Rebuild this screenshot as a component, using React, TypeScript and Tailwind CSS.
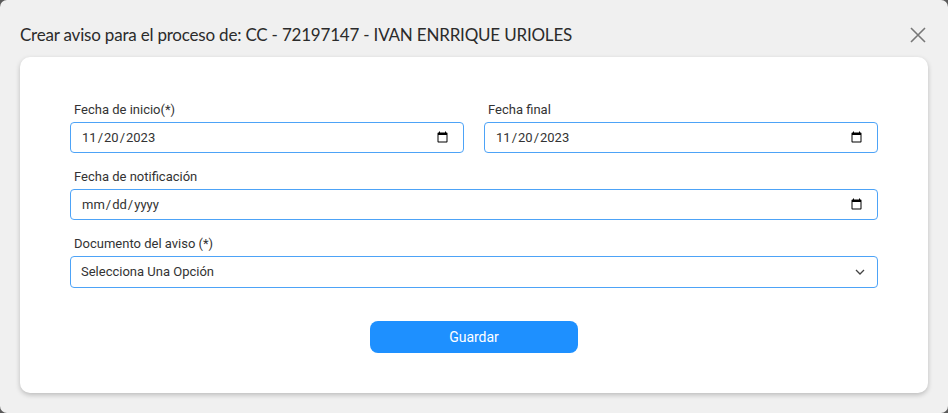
import React from "react";

const labelCls = "block text-[13px] leading-4 text-[#333] mb-[4px] pl-1";
const inputCls =
  "w-full h-[31px] rounded-[4px] border border-[#4da3f7] bg-white pl-[10px] pr-[12px] text-[13px] text-[#333] outline-none";

const Field = ({ label, children }: { label: string; children: React.ReactNode }) => (
  <div className="flex flex-col">
    <label className={labelCls}>{label}</label>
    {children}
  </div>
);

const App = () => {
  return (
    <div className="w-[948px] h-[413px] bg-[#5a5a5a]">
      <div
        className="w-full h-full bg-[#f0f0f0] rounded-[7px] px-5 pt-[20px] flex flex-col"
        style={{ fontFamily: "Roboto, 'Liberation Sans', sans-serif" }}
      >
        <div className="flex items-center justify-between h-[30px]">
          <h2
            className="text-[17px] tracking-[-0.2px] text-[#2b2b2b]"
            style={{ fontFamily: "Lato, 'Noto Sans', sans-serif" }}
          >
            Crear aviso para el proceso de: CC - 72197147 - IVAN ENRRIQUE URIOLES
          </h2>
          <button className="mr-[1px] text-[#777]" aria-label="Cerrar">
            <svg width="18" height="18" viewBox="0 0 18 18" fill="none" stroke="currentColor" strokeWidth="1.6">
              <path d="M2 2 L16 16 M16 2 L2 16" />
            </svg>
          </button>
        </div>
        <div className="mt-[7px] h-[336px] bg-white rounded-[10px] shadow-[0_2px_5px_rgba(0,0,0,0.22)] px-[50px] pt-[45px]">
          <div className="grid grid-cols-2 gap-x-5">
            <Field label="Fecha de inicio(*)">
              <input type="date" defaultValue="2023-11-20" className={inputCls} />
            </Field>
            <Field label="Fecha final">
              <input type="date" defaultValue="2023-11-20" className={inputCls} />
            </Field>
          </div>
          <div className="mt-[16px]">
            <Field label="Fecha de notificación">
              <input type="date" className={inputCls} />
            </Field>
          </div>
          <div className="mt-[16px]">
            <Field label="Documento del aviso (*)">
              <div className="relative">
                <select className={inputCls + " h-[32px] appearance-none"} defaultValue="">
                  <option value="">Selecciona Una Opción</option>
                </select>
                <svg
                  className="absolute right-[13px] top-[13px] pointer-events-none"
                  width="10"
                  height="6"
                  viewBox="0 0 10 6"
                  fill="none"
                  stroke="#444"
                  strokeWidth="1.3"
                >
                  <path d="M1 1 L5 5 L9 1" />
                </svg>
              </div>
            </Field>
          </div>
          <div className="flex justify-center mt-[33px]">
            <button className="w-[208px] h-[32px] rounded-[8px] bg-[#1e90ff] text-white text-[14px]">
              Guardar
            </button>
          </div>
        </div>
      </div>
    </div>
  );
};

export default App;
